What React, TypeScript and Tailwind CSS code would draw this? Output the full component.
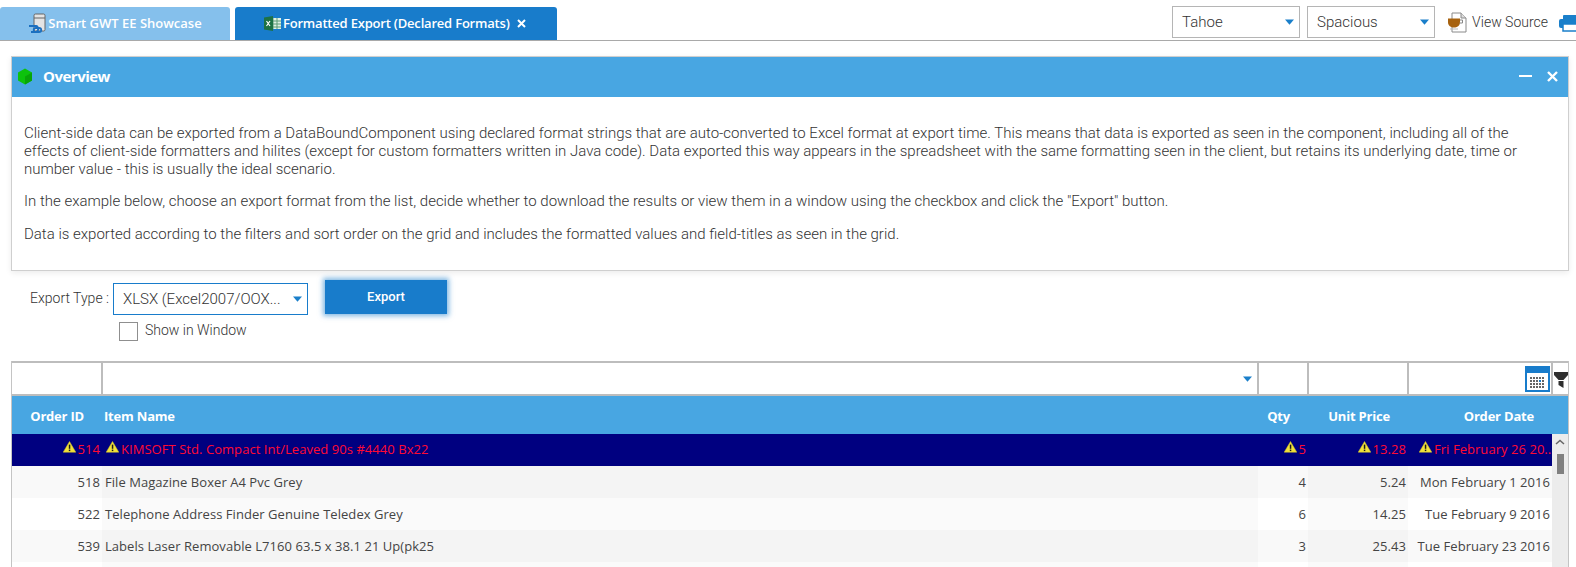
import React from "react";

const Caret = ({ className = "" }: { className?: string }) => (
  <svg width="9" height="6" viewBox="0 0 9 6" className={className}>
    <path d="M0 0.5H9L4.5 5.8Z" fill="#1a7fca" />
  </svg>
);

const Warn = ({ className = "" }: { className?: string }) => (
  <svg width="13" height="12" viewBox="0 0 13 12" className={`shrink-0 ${className}`}>
    <path d="M6.5 0.5L12.8 11.2H0.2Z" fill="#f2e23a" stroke="#d8c820" strokeWidth="0.5" />
    <rect x="5.8" y="3.6" width="1.5" height="4.2" fill="#1a1a1a" />
    <rect x="5.8" y="8.6" width="1.5" height="1.5" fill="#1a1a1a" />
  </svg>
);

const Select = ({ label, w }: { label: string; w: string }) => (
  <div className={`flex h-[32px] items-center justify-between border border-[#b5b5b5] pl-[9px] pr-[5px] text-[15px] font-light text-[#333] ${w}`}>
    <span>{label}</span>
    <Caret />
  </div>
);

type Row = { id: string; name: string; qty: string; price: string; date: string };
const rows: Row[] = [
  { id: "518", name: "File Magazine Boxer A4 Pvc Grey", qty: "4", price: "5.24", date: "Mon February 1 2016" },
  { id: "522", name: "Telephone Address Finder Genuine Teledex Grey", qty: "6", price: "14.25", date: "Tue February 9 2016" },
  { id: "539", name: "Labels Laser Removable L7160 63.5 x 38.1 21 Up(pk25", qty: "3", price: "25.43", date: "Tue February 23 2016" },
  { id: "", name: "", qty: "", price: "", date: "" },
];

const gridFont = "font-['Open_Sans',sans-serif]";

export default function App() {
  return (
    <div className="h-[567px] w-[1576px] overflow-hidden bg-white font-['Roboto',sans-serif] text-[#444]">
      {/* top bar */}
      <div className="flex h-[41px] items-end border-b border-[#a9a9a9]">
        <div className={`flex h-[33px] w-[230px] items-center justify-center gap-[1px] rounded-t-[3px] bg-[#85c0ec] pl-[1px] pr-[1px] text-[13px] font-semibold text-white ${gridFont}`}>
          <svg width="19" height="21" viewBox="0 0 19 21">
            <rect x="6" y="1" width="11" height="17" rx="1.5" fill="#e4e4e4" stroke="#666" />
            <path d="M6 5H17" stroke="#666" />
            <path d="M1 13H8C11 13 11 19 7.5 19C5 19 5 15 8 15H11C14 15 14 19 11 19H3" fill="none" stroke="#1a6fc0" strokeWidth="1.8" />
          </svg>
          <span>Smart GWT EE Showcase</span>
        </div>
        <div className={`ml-[5px] flex h-[33px] w-[322px] items-center rounded-t-[3px] bg-[#187ccb] pl-[29px] text-[13px] font-semibold tracking-[-0.2px] text-white ${gridFont}`}>
          <svg width="17" height="15" viewBox="0 0 17 15" className="mr-[2px] shrink-0">
            <rect x="6" y="2" width="11" height="11" fill="#dff0e4" />
            <path d="M9 2V13M13 2V13M6 5H17M6 8H17M6 11H17" stroke="#5c9c76" strokeWidth="1" />
            <path d="M0 1.5L9 0V15L0 13.5Z" fill="#1d7245" />
            <path d="M2.5 5L6 10M6 5L2.5 10" stroke="#fff" strokeWidth="1.2" />
          </svg>
          <span>Formatted Export (Declared Formats)</span>
          <svg width="9" height="9" viewBox="0 0 9 9" className="ml-[7px]">
            <path d="M1 1L8 8M8 1L1 8" stroke="#fff" strokeWidth="2" />
          </svg>
        </div>
        <div className="flex-1" />
        <div className="-mr-[5px] mb-[2px] flex shrink-0 items-center">
          <Select label="Tahoe" w="w-[128px]" />
          <Select label="Spacious" w="ml-[7px] w-[128px]" />
          <svg width="20" height="21" viewBox="0 0 20 21" className="ml-[12px]">
            <path d="M5 1H14L19 6V20H5Z" fill="#fff" stroke="#8a8a8a" />
            <path d="M14 1V6H19" fill="#ddd" stroke="#8a8a8a" />
            <path d="M1 6.5H13V10C13 14 10 15.5 7 15.5C4 15.5 1 14 1 10Z" fill="#a7620f" />
            <path d="M13 8H15.5V11H12.5" fill="none" stroke="#888" />
            <path d="M3 17H11" stroke="#bbb" />
          </svg>
          <span className="ml-[5px] whitespace-nowrap text-[14px] font-light text-[#333]">View Source</span>
          <svg width="22" height="20" viewBox="0 0 22 20" className="ml-[11px] mt-[2px] shrink-0">
            <rect x="4" y="2" width="14" height="5" rx="1" fill="#1a7fca" />
            <rect x="0" y="6" width="22" height="9" rx="2" fill="#1a7fca" />
            <rect x="4" y="11" width="14" height="7" fill="#fff" stroke="#1a7fca" strokeWidth="1.5" />
          </svg>
        </div>
      </div>

      {/* overview */}
      <div className="ml-[11px] mt-[15px] w-[1558px] border border-[#cfcfcf] shadow-[0_2px_6px_rgba(0,0,0,0.08)]">
        <div className={`flex h-[40px] items-center bg-[#48a6e2] pb-[2px] text-white ${gridFont}`}>
          <svg width="16" height="17" viewBox="0 0 16 17" className="ml-[5px]">
            <path d="M8 0.5L15 4.5V12.5L8 16.5L1 12.5V4.5Z" fill="#0dc20d" />
            <path d="M8 8.5L15 4.5V12.5L8 16.5Z" fill="#08a508" />
          </svg>
          <span className="ml-[10px] text-[15px] font-bold tracking-[-0.5px]">Overview</span>
          <div className="flex-1" />
          <div className="h-[2px] w-[13px] bg-white" />
          <svg width="11" height="11" viewBox="0 0 11 11" className="ml-[15px] mr-[10px]">
            <path d="M1 1L10 10M10 1L1 10" stroke="#fff" strokeWidth="2.4" />
          </svg>
        </div>
        <div className="h-[173px] px-[12px] pt-[27px] text-[15px] font-light leading-[18px] text-[#333]">
          <p className="w-[1520px]">
            Client-side data can be exported from a DataBoundComponent using declared format strings that are auto-converted to Excel format at export time. This means that data is exported as seen in the component, including all of the effects of client-side formatters and hilites (except for custom formatters written in Java code). Data exported this way appears in the spreadsheet with the same formatting seen in the client, but retains its underlying date, time or number value - this is usually the ideal scenario.
          </p>
          <p className="mt-[14px]">
            In the example below, choose an export format from the list, decide whether to download the results or view them in a window using the checkbox and click the "Export" button.
          </p>
          <p className="mt-[15px]">
            Data is exported according to the filters and sort order on the grid and includes the formatted values and field-titles as seen in the grid.
          </p>
        </div>
      </div>

      {/* form */}
      <div className="ml-[30px] mt-[9px] flex items-start">
        <span className="mt-[8px] w-[83px] whitespace-nowrap text-[14px] font-light text-[#333]">Export Type :</span>
        <div className="mt-[3px] flex h-[32px] w-[195px] items-center justify-between border border-[#187ccb] pl-[9px] pr-[5px] text-[15px] font-light text-[#333]">
          <span>XLSX (Excel2007/OOX...</span>
          <Caret />
        </div>
        <button className="ml-[17px] h-[34px] w-[122px] bg-[#187ccb] text-[13px] font-medium text-white shadow-[0_0_5px_2px_rgba(24,124,203,0.55)]">
          Export
        </button>
      </div>
      <div className="ml-[119px] mt-[7px] flex items-center">
        <div className="h-[19px] w-[19px] border border-[#8f8f8f]" />
        <span className="mb-[3px] ml-[7px] text-[14px] font-light leading-[16px] text-[#333]">Show in Window</span>
      </div>

      {/* grid */}
      <div className={`ml-[11px] mt-[20px] w-[1558px] border-x border-[#c4c4c4] ${gridFont}`}>
        <div className="flex h-[35px] border-y-2 border-[#bdbdbd]">
          <div className="w-[91px] border-r-2 border-[#bdbdbd]" />
          <div className="flex w-[1156px] items-center justify-end border-r-2 border-[#bdbdbd] pr-[5px]">
            <Caret />
          </div>
          <div className="w-[50px] border-r-2 border-[#bdbdbd]" />
          <div className="w-[100px] border-r-2 border-[#bdbdbd]" />
          <div className="flex w-[144px] items-center justify-end border-r-2 border-[#bdbdbd] pr-[1px]">
            <svg width="25" height="26" viewBox="0 0 25 26">
              <rect width="25" height="26" fill="#187ccb" />
              <rect x="2" y="7" width="21" height="17" fill="#fff" />
              <path d="M5 12h15M5 15h15M5 18h15M5 21h15" stroke="#666" strokeWidth="2" strokeDasharray="2 1" />
              <rect x="14" y="14" width="2" height="2" fill="#187ccb" />
            </svg>
          </div>
          <div className="flex w-[15px] items-center justify-center pt-[2px]">
            <svg width="14" height="16" viewBox="0 0 14 16">
              <path d="M0 0H14V3L9.5 8H4.5L0 3Z" fill="#2e2e2e" />
              <path d="M4.5 9H9.5V16L4.5 13Z" fill="#2e2e2e" />
            </svg>
          </div>
        </div>
        <div className="flex h-[38px] items-center bg-[#48a6e2] pt-[4px] text-[13px] font-bold tracking-[-0.2px] text-white">
          <div className="w-[90px] pr-[18px] text-right">Order ID</div>
          <div className="w-[1156px] pl-[2px]">Item Name</div>
          <div className="w-[50px] pr-[18px] text-right">Qty</div>
          <div className="w-[100px] pr-[18px] text-right">Unit Price</div>
          <div className="w-[144px] pr-[18px] text-right">Order Date</div>
        </div>
        <div className="flex">
          <div className="w-[1540px] text-[13px] tracking-[0.05px] text-[#444]">
            <div className="flex h-[32px] items-center bg-[#000080] text-[#ff0a32]">
              <div className="flex w-[90px] items-center justify-end gap-[2px] pr-[2px]"><Warn className="-mt-[6px]" />514</div>
              <div className="flex w-[1156px] items-center gap-[2px] pl-[4px]"><Warn className="-mt-[6px]" />KIMSOFT Std. Compact Int/Leaved 90s #4440 Bx22</div>
              <div className="flex w-[50px] items-center justify-end gap-[2px] pr-[2px]"><Warn className="-mt-[6px]" />5</div>
              <div className="flex w-[100px] items-center justify-end gap-[2px] pr-[2px]"><Warn className="-mt-[6px]" />13.28</div>
              <div className="flex w-[144px] items-center gap-[2px] pl-[11px]"><Warn className="-mt-[6px]" /><span className="overflow-hidden whitespace-nowrap">Fri February 26 20..</span></div>
            </div>
            {rows.map((r, i) => (
              <div key={i} className={`flex h-[32px] items-center ${i % 2 === 0 ? "bg-[#f9f9f9]" : "bg-white"}`}>
                <div className="h-full w-[90px] pr-[2px] pt-[7px] text-right">{r.id}</div>
                <div className={`h-full w-[1156px] pl-[3px] pt-[7px] ${i % 2 === 0 ? "bg-[#f4f4f4]" : "bg-[#fafafa]"}`}>{r.name}</div>
                <div className="h-full w-[50px] pr-[2px] pt-[7px] text-right">{r.qty}</div>
                <div className={`h-full w-[100px] pr-[2px] pt-[7px] text-right ${i % 2 === 0 ? "bg-[#f4f4f4]" : "bg-[#fafafa]"}`}>{r.price}</div>
                <div className="h-full w-[144px] whitespace-nowrap pr-[2px] pt-[7px] text-right">{r.date}</div>
              </div>
            ))}
          </div>
          <div className="flex w-[16px] flex-col items-center bg-[#ececec] pt-[5px]">
            <svg width="10" height="6" viewBox="0 0 10 6">
              <path d="M1 5L5 1.5L9 5" fill="none" stroke="#666" strokeWidth="1.5" />
            </svg>
            <div className="mt-[9px] h-[20px] w-[7px] bg-[#808080]" />
          </div>
        </div>
      </div>
    </div>
  );
}
